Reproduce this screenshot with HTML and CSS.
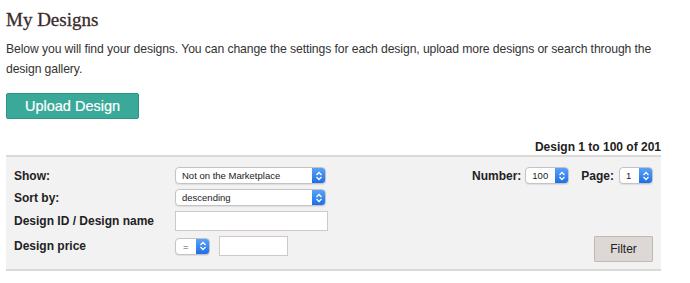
FILE: index.html
```html
<!DOCTYPE html>
<html lang="en">
<head>
  <meta charset="UTF-8" />
  <title>My Designs</title>
  <link rel="stylesheet" href="styles.css">
</head>
<body>
  <div class="page">
    <h1>My Designs</h1>
    <p class="intro">Below you will find your designs. You can change the settings for each design, upload more designs or search through the design gallery.</p>
    <button class="upload-btn">Upload Design</button>

    <div class="count">Design 1 to 100 of 201</div>

    <!-- Filter panel -->
    <form class="filters" onsubmit="return false">
      <label class="label">Show:</label>
      <div class="field">
        <span class="select wide">
          <select><option>Not on the Marketplace</option></select>
          <span class="arrows"><svg width="8" height="10" viewBox="0 0 8 10"><path d="M1.5 4 L4 1.5 L6.5 4 M1.5 6 L4 8.5 L6.5 6" fill="none" stroke="#fff" stroke-width="1.3"/></svg></span>
        </span>
      </div>
      <div class="paging">
        <label class="label">Number:</label>
        <span class="select num">
          <select><option>100</option></select>
          <span class="arrows"><svg width="8" height="10" viewBox="0 0 8 10"><path d="M1.5 4 L4 1.5 L6.5 4 M1.5 6 L4 8.5 L6.5 6" fill="none" stroke="#fff" stroke-width="1.3"/></svg></span>
        </span>
        <label class="label page-label">Page:</label>
        <span class="select pg">
          <select><option>1</option></select>
          <span class="arrows"><svg width="8" height="10" viewBox="0 0 8 10"><path d="M1.5 4 L4 1.5 L6.5 4 M1.5 6 L4 8.5 L6.5 6" fill="none" stroke="#fff" stroke-width="1.3"/></svg></span>
        </span>
      </div>

      <label class="label">Sort by:</label>
      <div class="field">
        <span class="select wide">
          <select><option>descending</option></select>
          <span class="arrows"><svg width="8" height="10" viewBox="0 0 8 10"><path d="M1.5 4 L4 1.5 L6.5 4 M1.5 6 L4 8.5 L6.5 6" fill="none" stroke="#fff" stroke-width="1.3"/></svg></span>
        </span>
      </div>
      <div></div>

      <label class="label">Design ID / Design name</label>
      <div class="field">
        <input type="text" class="text-input name-input">
      </div>
      <div></div>

      <label class="label top">Design price</label>
      <div class="field top">
        <span class="select op">
          <select><option>=</option></select>
          <span class="arrows"><svg width="8" height="10" viewBox="0 0 8 10"><path d="M1.5 4 L4 1.5 L6.5 4 M1.5 6 L4 8.5 L6.5 6" fill="none" stroke="#fff" stroke-width="1.3"/></svg></span>
        </span>
        <input type="text" class="text-input price-input">
      </div>
      <div class="actions">
        <button class="filter-btn">Filter</button>
      </div>
    </form>
  </div>
</body>
</html>
```

FILE: styles.css
```css
* {
  margin: 0;
  padding: 0;
  box-sizing: border-box;
}
body {
  background: #fff;
  color: #333;
  font-family: "Liberation Sans", Arial, sans-serif;
}
.page {
  width: 655px;
  margin-left: 6px;
}
h1 {
  font-family: "Liberation Serif", serif;
  font-weight: normal;
  font-size: 19px;
  color: #3b2b2b;
  -webkit-text-stroke: 0.3px #3b2b2b;
  padding-top: 9px;
  line-height: 22px;
}
.intro {
  font-size: 12.2px;
  letter-spacing: -0.1px;
  line-height: 20px;
  margin-top: 8px;
  color: #333;
}
.upload-btn {
  margin-top: 14px;
  width: 133px;
  height: 26px;
  background: #3aa99a;
  border: 1px solid #2e9486;
  border-radius: 2px;
  color: #fff;
  font-family: "Liberation Sans", Arial, sans-serif;
  font-size: 14.5px;
  -webkit-text-stroke: 0.2px #fff;
  cursor: pointer;
}
/* result count */
.count {
  text-align: right;
  font-size: 12px;
  font-weight: bold;
  color: #222;
  margin-top: 21px;
  line-height: 14px;
}
/* filter panel */
.filters {
  margin-top: 1px;
  background: #f2f2f2;
  border-top: 2px solid #dcd8d5;
  border-bottom: 2px solid #dcd8d5;
  padding: 10px 8px 7px 8px;
  display: grid;
  grid-template-columns: 161px 1fr auto;
  grid-template-rows: 17px 17px 20px 26px;
  row-gap: 5px;
  align-items: center;
}
.label {
  font-size: 12px;
  font-weight: bold;
  color: #222;
}
.label.top {
  align-self: start;
  line-height: 20px;
}
.field {
  display: flex;
  align-items: center;
  gap: 9px;
}
.field.top {
  align-self: start;
  height: 20px;
}
.paging {
  display: flex;
  align-items: center;
}
.paging .select {
  margin-left: 4px;
}
.page-label {
  margin-left: 12px;
}
.paging .select.pg {
  margin-left: 5px;
}
.select {
  display: inline-flex;
  height: 17px;
  background: #fff;
  border: 1px solid #c4c4c4;
  border-radius: 4px;
  overflow: hidden;
  box-shadow: 0 1px 1px rgba(0,0,0,0.08);
}
.select select {
  appearance: none;
  -webkit-appearance: none;
  border: none;
  background: transparent;
  font-family: "Liberation Sans", Arial, sans-serif;
  font-size: 9.5px;
  color: #222;
  padding-left: 6px;
  flex: 1;
  min-width: 0;
  outline: none;
}
.arrows {
  width: 13px;
  background: linear-gradient(#5aa2f8, #1d6fe8);
  display: flex;
  align-items: center;
  justify-content: center;
}
.select.wide { width: 151px; }
.select.num { width: 44px; }
.select.pg { width: 34px; }
.select.op { width: 35px; }
.select.op select { padding-left: 7px; color: #555; }
.text-input {
  height: 20px;
  border: 1px solid #cfc8c4;
  background: #fff;
  outline: none;
}
.name-input {
  width: 153px;
}
.price-input {
  width: 69px;
  height: 20px;
}
.actions {
  display: flex;
  justify-content: flex-end;
  align-self: stretch;
}
.filter-btn {
  width: 59px;
  height: 26px;
  background: #ddd8d5;
  border: 1px solid #bfb9b6;
  border-radius: 1px;
  font-family: "Liberation Sans", Arial, sans-serif;
  font-size: 12px;
  color: #222;
  cursor: pointer;
}
```
